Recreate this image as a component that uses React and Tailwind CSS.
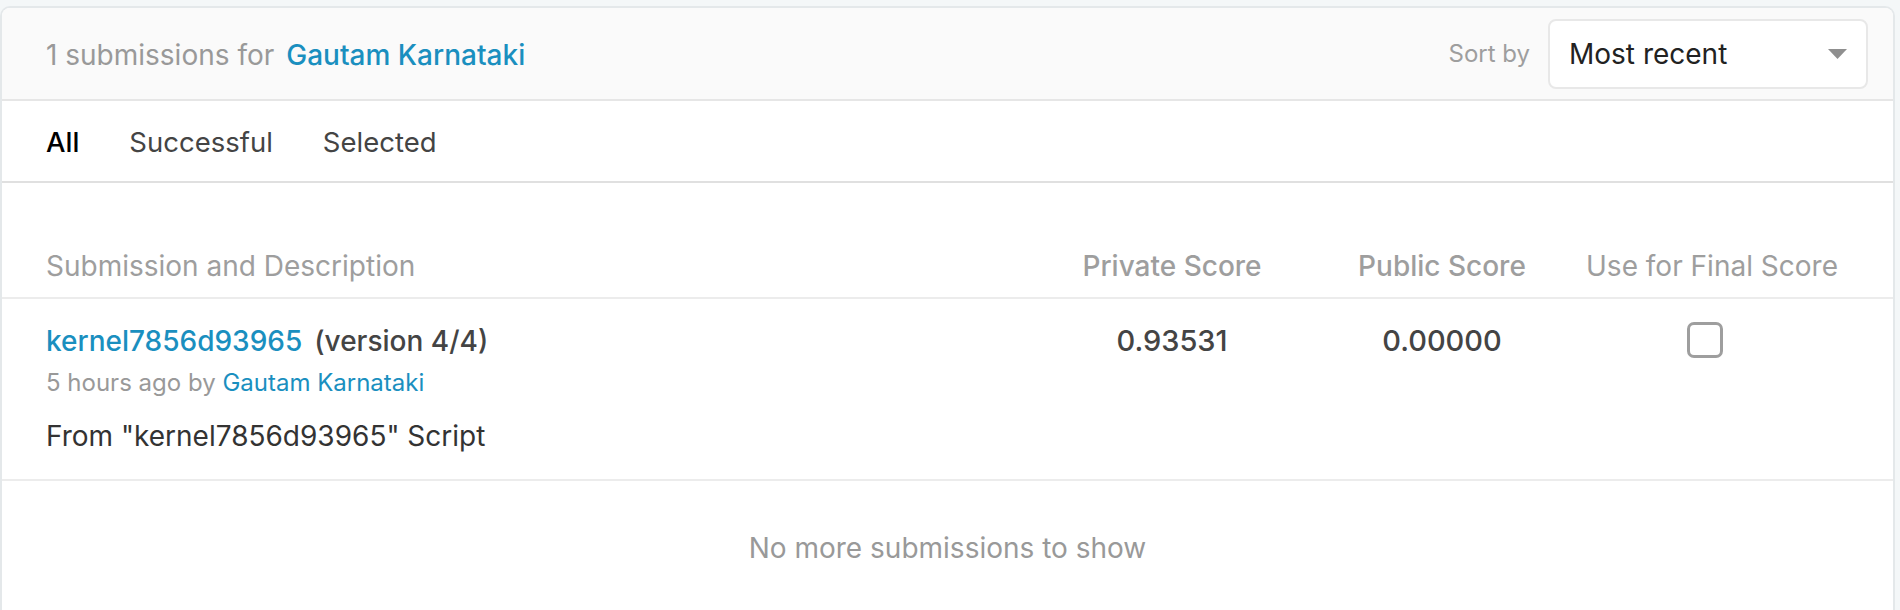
import React, { useState } from "react";

const font = { fontFamily: "Inter, 'Noto Sans', sans-serif" };

const Checkbox = ({ checked, onChange }) => (
  <button
    onClick={onChange}
    className="w-[36px] h-[36px] rounded-[7px] border-[3px] border-[#9e9e9e] bg-white flex items-center justify-center"
  >
    {checked && <span className="w-[16px] h-[16px] bg-[#9e9e9e] rounded-[2px]" />}
  </button>
);

const App = () => {
  const [tab, setTab] = useState("All");
  const [selected, setSelected] = useState(false);
  const tabs = ["All", "Successful", "Selected"];

  return (
    <div className="min-h-[610px] bg-[#f4f7f8] pt-[6px] pr-[5px]" style={font}>
      <div className="min-h-[604px] bg-white border-[2px] border-b-0 border-[#e4e8ea] rounded-t-[10px] overflow-hidden">
        {/* header */}
        <div className="h-[93px] bg-[#fafafa] border-b-[2px] border-[#e6e6e6] flex items-center justify-between pl-[44px] pr-[25px]">
          <div className="text-[28px] text-[#999999] flex items-center gap-[12px] pt-[2px]">
            <span>1 submissions for</span>
            <a className="text-[#1a8fbf] font-medium">Gautam Karnataki</a>
          </div>
          <div className="flex items-center gap-[18px]">
            <span className="text-[24px] text-[#9e9e9e]">Sort by</span>
            <div className="w-[320px] h-[70px] bg-white border-[2px] border-[#e8e8e8] rounded-[8px] flex items-center justify-between pl-[19px] pr-[19px]">
              <span className="text-[28px] text-[#222222]">Most recent</span>
              <svg width="19" height="10" viewBox="0 0 19 10"><path d="M0 0 L19 0 L9.5 10 Z" fill="#8f8f8f" /></svg>
            </div>
          </div>
        </div>

        {/* tabs */}
        <div className="h-[82px] border-b-[2px] border-[#e0e0e0] flex items-center pl-[44px] pt-[4px] gap-[50px]">
          {tabs.map((t) => (
            <button
              key={t}
              onClick={() => setTab(t)}
              className={`text-[27.5px] ${tab === t ? "text-black font-medium" : "text-[#444444]"}`}
            >
              {t}
            </button>
          ))}
        </div>

        {/* table header */}
        <div className="mt-[48px] h-[68px] border-b-[2px] border-[#ececec] flex items-center pl-[44px] pr-[46px] pt-[4px] text-[28px] text-[#9e9e9e]">
          <div className="flex-1">Submission and Description</div>
          <div className="w-[270px] text-center font-medium">Private Score</div>
          <div className="w-[270px] text-center font-medium">Public Score</div>
          <div className="w-[270px] text-center">Use for Final Score</div>
        </div>

        {/* row */}
        <div className="h-[182px] border-b-[2px] border-[#ececec] flex pl-[44px] pr-[46px] pt-[24px]">
          <div className="flex-1">
            <div className="text-[28px] font-medium leading-[36px]">
              <a className="text-[#1a8fbf]">kernel7856d93965</a>
              <span className="text-[#444444] ml-[12px]">(version 4/4)</span>
            </div>
            <div className="text-[24px] text-[#999999] mt-[9px] leading-[30px]">
              5 hours ago by <a className="text-[#1a8fbf]">Gautam Karnataki</a>
            </div>
            <div className="text-[28px] text-[#333333] mt-[20px] leading-[36px]">From "kernel7856d93965" Script</div>
          </div>
          <div className="w-[270px] text-center text-[29px] font-medium text-[#444444] leading-[36px]">0.93531</div>
          <div className="w-[270px] text-center text-[29px] font-medium text-[#444444] leading-[36px]">0.00000</div>
          <div className="w-[270px] flex justify-center">
            <div className="-mt-[1px] -ml-[14px]">
              <Checkbox checked={selected} onChange={() => setSelected(!selected)} />
            </div>
          </div>
        </div>

        {/* footer */}
        <div className="h-[130px] flex items-center justify-center pt-[4px] text-[28px] text-[#999999]">
          No more submissions to show
        </div>
      </div>
    </div>
  );
};

export default App;
